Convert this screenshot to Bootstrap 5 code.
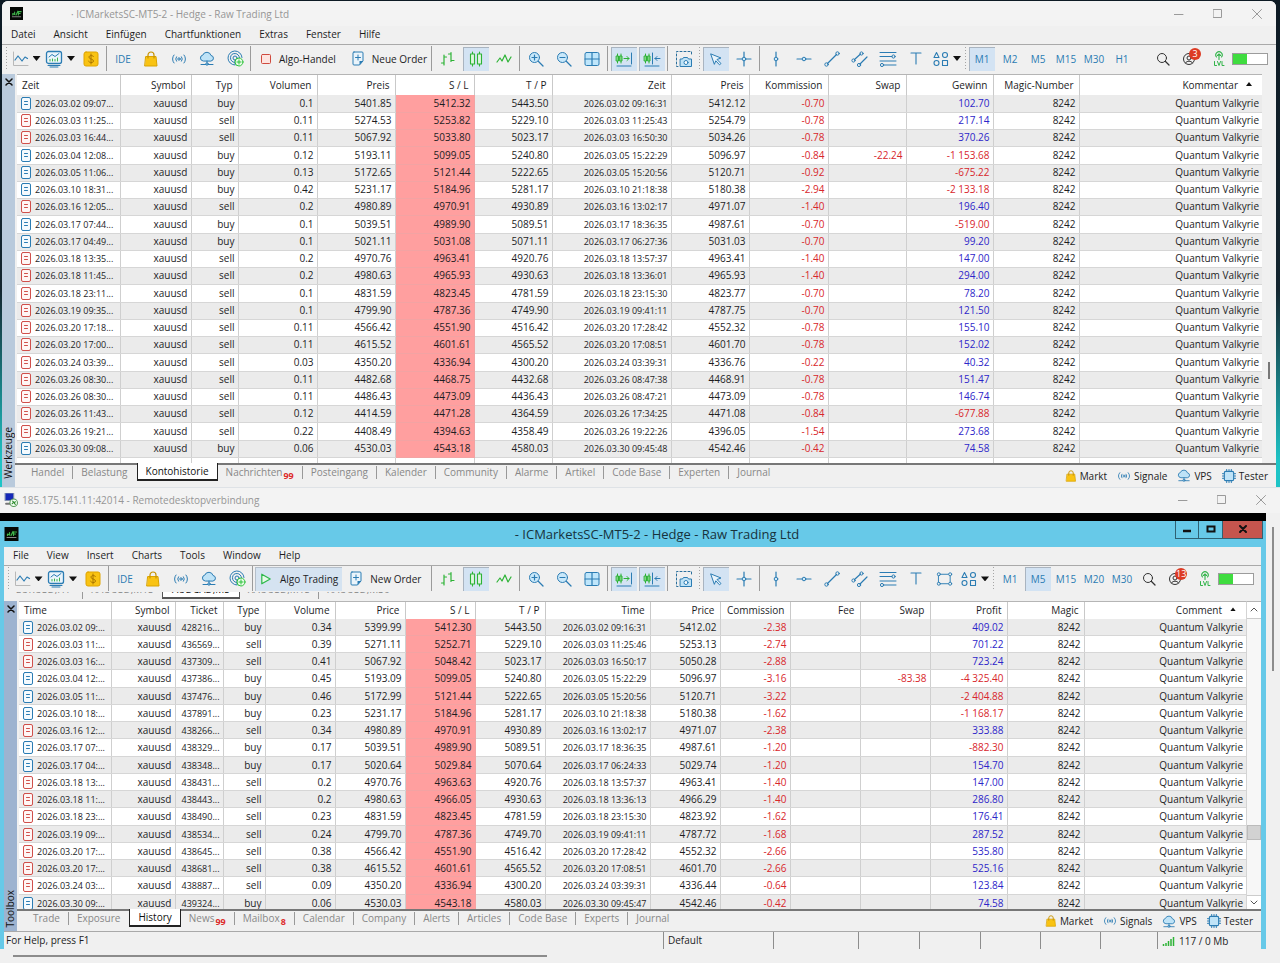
<!DOCTYPE html>
<html lang="de">
<head>
<meta charset="utf-8">
<meta name="viewport" content="width=device-width, initial-scale=1">
<title>ICMarketsSC-MT5-2 - Hedge - Raw Trading Ltd</title>
<link href="https://cdn.jsdelivr.net/npm/bootstrap@5.3.0/dist/css/bootstrap.min.css" rel="stylesheet">
<style>
:root{--ui:"Open Sans","Noto Sans",sans-serif;--ink:#1d1d1f;--blue:#2b7cb3;--line:#a9a9a9}
body{font-family:var(--ui);font-size:10px;line-height:16px;color:var(--ink);background:linear-gradient(#0d1a24 0,#14252f 30%,#1ec4c6 48%,#1ec4c6 100%)}
button,a{font:inherit;color:inherit;text-decoration:none}
button{background:none;border:0;padding:0}
svg{display:block;fill:none;stroke-linecap:round;stroke-linejoin:round}
/* windows */
.win-local{flex:487 1 0;min-height:0;margin:1px 4px 0 2px;background:#f0f0f0;border-radius:6px 6px 0 0}
.win-remote{flex:476 1 0;min-height:0;background:#f0f0f0}
.bar-title{height:25px;background:#f3f3f3;color:#969696;flex:none}
.win-local .bar-title{border-radius:6px 6px 0 0}
.win-btns{color:#9a9a9a}
.win-btns button{width:39px;display:flex;justify-content:center}
.bar-menu{height:18px;flex:none}
.bar-menu a{padding:0 9px}
.bar-tools{height:30px;flex:none;border-top:1px solid var(--line);padding-bottom:2px}
.lead-set{width:428px;flex:none;padding-left:3px}
.tool{width:28px;height:24px;flex:none;display:flex;align-items:center;justify-content:center;color:var(--blue);position:relative}
.tail .tool{width:26px}
.tool.wide{width:34px;gap:4px}
.tool.on::before{content:"";position:absolute;inset:0 1px;background:#d3e3f3;border:1px solid #a9b4c0;border-width:1px 0 0 1px}
.tool>*{position:relative;white-space:nowrap}
.tool>.note{position:absolute;left:13px;top:1px;min-width:12px;height:12px;padding:0 1px;border-radius:6px;background:#dd3b24;color:#fff;font-size:9px;line-height:12px;text-align:center}
.sep{width:4px;height:25px;flex:none;background:linear-gradient(#9b9b9b,#9b9b9b) 1px 0/1px 100% no-repeat}
.grip{width:4px;height:24px;flex:none;background:repeating-linear-gradient(#a5a5a5 0 1px,transparent 1px 3px) 1px 0/1px 100% no-repeat}
.tool-text{height:24px;display:flex;align-items:center;gap:8px;flex:none;white-space:nowrap}
.tool-text.on{background:#d5e3f1;border:1px solid #b5bfca;border-width:1px 0 0 1px}
.caret{width:8px;height:5px;background:#111;clip-path:polygon(0 0,100% 0,50% 100%)}
.meter{width:36px;height:12px;border:1px solid #9c9c9c;background:linear-gradient(90deg,#3fdc3f 40%,#fff 40%)}
/* docked panel */
.dock{flex:1 1 0;min-height:0}
.dock-main{min-width:0}
.pane{padding-left:2px}
.rail{width:13px;flex:none;background:#b9cadc;color:#111}
.rail span{writing-mode:vertical-rl;transform:rotate(180deg);line-height:13px}
.grid-wrap{overflow:hidden;background:#fff;border-top:1px solid #b5b5b5;flex:1 1 0;min-width:0}
.deals{table-layout:fixed;width:100%;border-collapse:collapse;white-space:nowrap}
.deals th{font-weight:400;height:20px;padding:0 5px;text-align:right;border-right:1px solid #c9c9c9;line-height:18px}
.deals td{height:17px;padding:0 3px 0 0;text-align:right;border-right:1px solid #cfcfcf;border-bottom:1px solid #d6d6d6;line-height:15px}
.deals td.num{font-size:9px}
.deals tr:nth-child(4n) td{height:18px}
.deals th:first-child,.deals td:first-child{text-align:left}
.deals td:first-child svg{display:inline-block;vertical-align:-3px;margin:0 4px}
.deals tbody tr:nth-child(odd) td{background:#ebebeb}
.deals tbody tr td.stop{background:#ff9f9f;border-color:#f2a3a3}
.deals tbody tr.rest td{background:#fff}
.deals .neg{color:#d8262c}.deals .pos{color:#2d25c9}
.deals th:last-child,.deals td:last-child{border-right:0}
.sort{display:inline-block;width:6px;height:4px;background:#111;clip-path:polygon(50% 0,100% 100%,0 100%);margin:0 5px 3px 8px}
.tabs{height:24px;flex:none;border-top:2px solid #777;color:#888}
.tabs a.t{padding:0 8px;display:block;border-right:1px solid #999;height:13px;line-height:13px;margin-top:1px;white-space:nowrap}
.tabs a.t.end{border-color:transparent}
.tabs a.t.cur{height:18px;margin-top:-2px;line-height:17px;background:#fff;color:#111;border:1px solid #222;border-width:0 1px 2px}
.tabs sub{color:#dd2b2b;font-weight:700;font-size:9px;bottom:-3px;margin-left:1px;line-height:0}
.links{gap:10px;color:#222}
.links a{display:flex;align-items:center;gap:3px}
.local-thumb{width:14px;flex:none;background:#f0f0f0}
.local-thumb i{width:2px;height:17px;background:#777;margin:auto 0 84px 6px}
/* remote session */
.session{border:solid #67c9e8;border-width:0 5px 0 4px;background:#f0f0f0;flex:1 1 0;min-width:0;min-height:0}
.session-title{height:26px;background:#67c9e8;font-size:13px;color:#17323c;margin:0 -5px 0 -4px;flex:none;position:relative}
.session-btns{position:absolute;right:3px;top:0}
.session-btns button{height:18px;width:24px;border:1px solid #2f6173;border-left-width:0;border-top:0;display:flex;align-items:center;justify-content:center}
.session-btns button:first-child{border-left-width:1px}
.session-btns .quit{width:40px;background:#c5554e}
.session .rail{background:#9db3d0}
.session .bar-tools{height:27px;padding-bottom:0}
.session .lead-set{width:426px}
.session .deals th{height:17px;line-height:16px}
.session .tabs{height:22px}
.chart-tabs{height:9px;overflow:hidden;flex:none;color:#888}
.chart-tabs ul{margin:-11px 0 0}
.chart-tabs li{width:79px;text-align:center}
.chart-tabs .cur{width:78px;background:#fff;border:1px solid #555;border-width:0 1px 2px;color:#111}
.chart-tabs .bar{border-right:1px solid #999}
.vscroll{width:15px;flex:none;background:#f7f7f7;border-left:1px solid #d4d4d4;border-top:1px solid #b5b5b5}
.vscroll button{height:17px;display:flex;align-items:center;justify-content:center;background:#fff;border:solid #ccc;border-width:0 0 1px}
.vscroll button:last-child{border-width:1px 0 0;height:14px}
.vscroll .knob{height:15px;background:#d2d2d2;border:1px solid #bbb;margin-bottom:55px}
.status{display:grid;grid-template-columns:1fr 110px 85px 61px 61px 60px 60px 57px 104px;height:18px;border-top:1px solid var(--line);flex:none}
.status>div+div{border-left:1px solid #8d8d8d;padding-left:4px}
.status>div:first-child{padding-left:2px}
.outer-v{width:14px;flex:none}
.outer-v i{width:2px;height:144px;background:#8c8c8c;margin:14px auto 0}
.outer-h{height:14px;flex:none}
.outer-h i{height:2px;width:42%;background:#8c8c8c;margin-left:5px}
</style>
</head>
<body class="d-flex flex-column vh-100 overflow-hidden">

<svg width="0" height="0" class="position-absolute" aria-hidden="true">
<symbol id="logo" viewBox="0 0 14 14"><rect width="14" height="14" fill="#050805"/><path d="M3 8.500V7l2 1V5.500M6.500 8.500l2-4M9 8.500V5h3M9 7h2" stroke="#3fb54a" stroke-width="1.200"/><path d="M2.500 10.500h9" stroke="#8a8a8a"/></symbol>
<symbol id="chart" viewBox="0 0 17 16"><path d="M1.500 1v13.500H16" stroke="#b8b8b8"/><path d="M3 9l3-4 4 5 3-4 2.500 1.500" stroke="#2b7cb3" stroke-width="1.200"/></symbol>
<symbol id="charts" viewBox="0 0 18 18"><rect x="1.500" y="1.500" width="15" height="12" rx="2" stroke="#2b7cb3" stroke-width="1.300" fill="#eaf4fb"/><path d="M4 7l3-2.500 3 2 4-3" stroke="#2b7cb3"/><path d="M5 11V9.500M7.500 11V9M10 11V9.500M12.500 11V8" stroke="#3bb54a"/><path d="M3 15.500h12M5 17h8" stroke="#2b7cb3"/></symbol>
<symbol id="dollar" viewBox="0 0 16 16"><rect x="1" y="1" width="14" height="14" rx="2" fill="#f9c313" stroke="#e0a400"/><path d="M10.500 5.500C10 4.200 6 4 6 6.200S10.500 7.800 10.500 10 6 12 5.500 10.200M8 3v10" stroke="#a87400"/></symbol>
<symbol id="bag" viewBox="0 0 16 16"><path d="M3 5.500h10l1 9.500H2z" fill="#f9c313" stroke="#d9a300"/><path d="M5 7V4a3 3 0 0 1 6 0v3" stroke="#c79200" stroke-width="1.200"/></symbol>
<symbol id="signal" viewBox="0 0 16 12"><g stroke="#2b7cb3"><circle cx="8" cy="6" r="1.200"/><path d="M5.500 3.800a3.500 3.500 0 0 0 0 4.400M10.500 3.800a3.500 3.500 0 0 1 0 4.400M3 2a6 6 0 0 0 0 8M13 2a6 6 0 0 1 0 8" /></g></symbol>
<symbol id="cloud" viewBox="0 0 16 15"><path d="M4 10a3 3 0 0 1-.2-5.900A4.300 4.300 0 0 1 12 4.500 2.800 2.800 0 0 1 12.300 10z" fill="#bfe3f7" stroke="#2b7cb3"/><path d="M8 10v3M2 13.500h12" stroke="#2b7cb3"/><circle cx="8" cy="13" r="1.200" fill="#bfe3f7" stroke="#2b7cb3"/></symbol>
<symbol id="globe" viewBox="0 0 17 17"><g stroke="#2b7cb3"><path d="M8 15A7 7 0 1 1 15 7.500"/><path d="M7.500 12.500A4.500 4.500 0 1 1 12.500 8"/><circle cx="8" cy="8" r="2"/><path d="M8 10v4"/></g><circle cx="12" cy="12" r="4" fill="#e6fae6" stroke="#2fc23c"/><path d="M12 10v4M10 12h4" stroke="#2fc23c"/></symbol>
<symbol id="square" viewBox="0 0 10 10"><rect x=".5" y=".5" width="9" height="9" rx="1" fill="#fde4e0" stroke="#cf4a3e"/></symbol>
<symbol id="play" viewBox="0 0 10 10"><path d="M1.500 1l7 4-7 4z" fill="#e6fbe8" stroke="#2db84a"/></symbol>
<symbol id="order" viewBox="0 0 12 15"><path d="M2 1h8a1 1 0 0 1 1 1v8l-3.500 4H2a1 1 0 0 1-1-1V2a1 1 0 0 1 1-1z" fill="#eaf4fb" stroke="#2b7cb3"/><path d="M7.500 14v-4H11z" fill="#2b7cb3"/><path d="M6 4v5M3.500 6.500h5" stroke="#2b7cb3"/></symbol>
<symbol id="bars" viewBox="0 0 16 16"><path d="M4 4v10M1.500 12H4M4 6h2.500M11 1.500v9M8.500 3H11M11 9.500h3" stroke="#2db336" stroke-width="1.200"/></symbol>
<symbol id="candles" viewBox="0 0 14 16"><g stroke="#2db336" stroke-width="1.100" fill="#dff5e0"><path d="M3.500 1v14M10.500 1v14"/><rect x="1.500" y="3" width="4" height="10"/><rect x="8.500" y="3" width="4" height="10"/></g></symbol>
<symbol id="zig" viewBox="0 0 16 12"><path d="M1 9l3-4 2 3 3-6 3 7 3-5" stroke="#2db336" stroke-width="1.200"/></symbol>
<symbol id="zin" viewBox="0 0 16 16"><g stroke="#2b7cb3"><circle cx="6.500" cy="6.500" r="5" fill="#c9e8fa"/><path d="M10.500 10.500l4.500 4.500" stroke-width="1.300"/><path d="M4 6.500h5M6.500 4v5" stroke-width="1.200"/></g></symbol>
<symbol id="zout" viewBox="0 0 16 16"><g stroke="#2b7cb3"><circle cx="6.500" cy="6.500" r="5" fill="#c9e8fa"/><path d="M10.500 10.500l4.500 4.500" stroke-width="1.300"/><path d="M4 6.500h5" stroke-width="1.200"/></g></symbol>
<symbol id="tiles" viewBox="0 0 16 16"><rect x="1" y="1.500" width="14" height="13" rx="1.500" fill="#bfe6fb" stroke="#2b7cb3"/><path d="M8 2v12M1 8h14" stroke="#2b7cb3" stroke-width="1.200"/></symbol>
<symbol id="shiftr" viewBox="0 0 18 16"><g stroke="#2db336" fill="#7fd584"><path d="M2.500 3v9M6 3v9"/><rect x="1.500" y="5" width="2" height="5"/><rect x="5" y="5" width="2" height="5"/><path d="M9 7.500h5M12 5.500l2 2-2 2" fill="none"/></g><path d="M16.500 2v11M2 15h14" stroke="#2b7cb3"/></symbol>
<symbol id="shiftl" viewBox="0 0 18 16"><g stroke="#2db336" fill="#7fd584"><path d="M2.500 3v9M6 3v9"/><rect x="1.500" y="5" width="2" height="5"/><rect x="5" y="5" width="2" height="5"/></g><path d="M9.500 2v11M2 15h14M17 7.500h-5M14 5.500l-2 2 2 2" stroke="#2b7cb3"/></symbol>
<symbol id="camera" viewBox="0 0 18 18"><path d="M3 16.500H1.500v-15h15V6" stroke="#2b6f9c" stroke-dasharray="2 2"/><path d="M5.500 9h2l1-1.500h4l1 1.500h3v7.500h-11z" fill="#bfe3f7" stroke="#2b7cb3"/><circle cx="11" cy="12.500" r="2" fill="#fff" stroke="#2b7cb3"/></symbol>
<symbol id="arrow" viewBox="0 0 14 14"><path d="M2 2l10 4-4 1.500 4 4-1.500 1.300-3.700-4L5.500 12z" fill="#eaf4fb" stroke="#2b7cb3"/></symbol>
<symbol id="cross" viewBox="0 0 16 16"><path d="M8 1v5M8 10v5M1 8h5M10 8h5" stroke="#2b7cb3" stroke-width="1.200"/><circle cx="8" cy="8" r="1.800" stroke="#2b7cb3" fill="#cfe9f8"/></symbol>
<symbol id="vert" viewBox="0 0 16 16"><path d="M8 1v5M8 10v5" stroke="#2b7cb3" stroke-width="1.200"/><circle cx="8" cy="8" r="1.800" stroke="#2b7cb3" fill="#cfe9f8"/></symbol>
<symbol id="horz" viewBox="0 0 16 16"><path d="M1 8h5M10 8h5" stroke="#2b7cb3" stroke-width="1.200"/><circle cx="8" cy="8" r="1.800" stroke="#2b7cb3" fill="#cfe9f8"/></symbol>
<symbol id="trend" viewBox="0 0 16 16"><g stroke="#2b7cb3"><path d="M3.500 12.500l9-9" stroke-width="1.200"/><circle cx="2.500" cy="13.500" r="1.700"/><circle cx="13.500" cy="2.500" r="1.700"/></g></symbol>
<symbol id="channel" viewBox="0 0 18 16"><g stroke="#2b7cb3"><path d="M3.500 8.500l6-5.500M9 13l7-7" stroke-width="1.200"/><circle cx="2.500" cy="9.500" r="1.600"/><circle cx="10.500" cy="2.500" r="1.600"/><circle cx="8" cy="14" r="1.600"/></g></symbol>
<symbol id="fibo" viewBox="0 0 18 16"><g stroke="#2b7cb3"><path d="M1 1.500h16M1 5.500h12M1 10h16M5 14h12"/><circle cx="14.500" cy="5.500" r="1.600"/><circle cx="3" cy="14" r="1.600"/></g></symbol>
<symbol id="text" viewBox="0 0 12 13"><path d="M1 1h10M6 1v11" stroke="#2b7cb3" stroke-width="1.100"/></symbol>
<symbol id="box" viewBox="0 0 18 16"><g stroke="#2b7cb3"><path d="M3 3h12v10H3z"/><g fill="#f0f0f0"><circle cx="3" cy="3" r="1.600"/><circle cx="15" cy="3" r="1.600"/><circle cx="3" cy="13" r="1.600"/><circle cx="15" cy="13" r="1.600"/></g></g></symbol>
<symbol id="shapes" viewBox="0 0 16 16"><g stroke="#2b7cb3" stroke-width="1.100"><path d="M3.500 1.500l2.500 5H1z"/><circle cx="12" cy="4" r="2.500"/><circle cx="3.500" cy="12" r="2.500"/><rect x="9.500" y="9.500" width="5" height="5"/></g></symbol>
<symbol id="search" viewBox="0 0 14 14"><circle cx="6" cy="6" r="4.500" stroke="#333"/><path d="M9.500 9.500L13 13" stroke="#333" stroke-width="1.300"/></symbol>
<symbol id="user" viewBox="0 0 14 14"><circle cx="7" cy="7" r="5.500" stroke="#333"/><circle cx="7" cy="6" r="2" stroke="#333"/><path d="M3.500 11c1-2.500 6-2.500 7 0" stroke="#333"/></symbol>
<symbol id="level" viewBox="0 0 12 15"><g stroke="#32b44a"><path d="M6 8.500V4M3.500 6a3.200 3.200 0 1 1 5 0M4.500 4.500L6 3l1.500 1.500" stroke-width="1.100"/><path d="M1.500 10.500v4h2M4.500 10.500l1.500 4 1.500-4M9 10.500v4h2"/></g></symbol>
<symbol id="chip" viewBox="0 0 15 15"><path d="M5 0v15M7.500 0v15M10 0v15M0 5h15M0 7.500h15M0 10h15" stroke="#2b7cb3"/><rect x="2.500" y="2.500" width="10" height="10" rx="1.500" fill="#bfe3f7" stroke="#2b7cb3" stroke-width="1.200"/></symbol>
<symbol id="doc-b" viewBox="0 0 10 13"><rect x=".5" y=".5" width="9" height="12" rx="1.500" fill="#f4fafe" stroke="#2b7cb3"/><path d="M3.500 4.500h3M3.500 7.500h3" stroke="#2b7cb3"/></symbol>
<symbol id="doc-s" viewBox="0 0 10 13"><rect x=".5" y=".5" width="9" height="12" rx="1.500" fill="#fff6f5" stroke="#d0504b"/><path d="M3.500 4.500h3M3.500 7.500h3" stroke="#d0504b"/></symbol>
<symbol id="rdp" viewBox="0 0 13 13"><rect x="1" y="0" width="8" height="7" fill="#1628b8" stroke="#7f8fb0"/><path d="M2 10h6" stroke="#777" stroke-width="2"/><circle cx="9" cy="9" r="3.500" fill="#f4fff4" stroke="#5a9a5a"/><path d="M7.500 10l1.500-1.500L8 7.500M10.500 8L9.500 9.500l1 1" stroke="#2d8a2d"/></symbol>
<symbol id="min" viewBox="0 0 10 10"><path d="M0 5.500h9" stroke="#9a9a9a"/></symbol>
<symbol id="max" viewBox="0 0 10 10"><rect x=".5" y=".5" width="8" height="8" stroke="#9a9a9a"/></symbol>
<symbol id="close" viewBox="0 0 10 10"><path d="M.5.5l9 9M9.500.5l-9 9" stroke="#9a9a9a"/></symbol>
<symbol id="x" viewBox="0 0 8 8"><path d="M1 1l6 6M7 1L1 7" stroke="#111" stroke-width="1.500"/></symbol>
</svg>

<section class="win-local d-flex flex-column">
  <header class="bar-title d-flex align-items-center">
    <svg class="ms-2" width="13" height="13"><use href="#logo"/></svg>
    <span class="ms-5 me-auto">· ICMarketsSC-MT5-2 - Hedge - Raw Trading Ltd</span>
    <div class="win-btns d-flex">
      <button aria-label="Minimieren"><svg width="10" height="10"><use href="#min"/></svg></button>
      <button aria-label="Maximieren"><svg width="10" height="10"><use href="#max"/></svg></button>
      <button aria-label="Schließen"><svg width="10" height="10"><use href="#close"/></svg></button>
    </div>
  </header>
  <nav class="bar-menu d-flex" data-menu="Datei|Ansicht|Einfügen|Chartfunktionen|Extras|Fenster|Hilfe"></nav>
  <div class="bar-tools d-flex align-items-center" data-tools="local"></div>
  <div class="dock d-flex">
    <div class="rail d-flex flex-column align-items-center justify-content-between pt-1 pb-2"><button aria-label="Schließen"><svg width="8" height="8"><use href="#x"/></svg></button><span>Werkzeuge</span></div>
    <div class="dock-main d-flex flex-column flex-grow-1">
      <div class="dock pane d-flex"><div class="grid-wrap"><table class="deals" id="deals-local"></table></div><div class="local-thumb d-flex"><i></i></div></div>
      <div class="tabs d-flex" data-tabs="Handel|Belastung|*Kontohistorie|Nachrichten#99|Posteingang|Kalender|Community|Alarme|Artikel|Code Base|Experten|Journal" data-links="Markt|Signale|VPS|Tester"></div>
    </div>
  </div>
</section>

<section class="win-remote d-flex flex-column border-top">
  <header class="bar-title d-flex align-items-center">
    <svg class="ms-1" width="14" height="14"><use href="#rdp"/></svg>
    <span class="ms-1 me-auto">185.175.141.11:42014 - Remotedesktopverbindung</span>
    <div class="win-btns d-flex">
      <button aria-label="Minimieren"><svg width="10" height="10"><use href="#min"/></svg></button>
      <button aria-label="Maximieren"><svg width="10" height="10"><use href="#max"/></svg></button>
      <button aria-label="Schließen"><svg width="10" height="10"><use href="#close"/></svg></button>
    </div>
  </header>
  <div class="dock d-flex">
    <div class="dock-main d-flex flex-column flex-grow-1">
      <div class="bg-black flex-shrink-0 pt-2"></div>
      <div class="session d-flex flex-column">
        <header class="session-title d-flex align-items-center justify-content-center">
          <svg class="position-absolute start-0 ms-1" width="15" height="14"><use href="#logo"/></svg>
          <span class="ps-5">- ICMarketsSC-MT5-2 - Hedge - Raw Trading Ltd</span>
          <div class="session-btns d-flex">
            <button aria-label="Minimize"><svg width="10" height="8"><path d="M1 6h8" stroke="#111" stroke-width="2.500" stroke-linecap="butt"/></svg></button>
            <button aria-label="Maximize"><svg width="10" height="8"><path d="M1.500 1.500h7v5h-7z" stroke="#111" stroke-width="2" stroke-linejoin="miter"/></svg></button>
            <button class="quit" aria-label="Close"><svg width="8" height="8"><path d="M1 1l6 6M7 1L1 7" stroke="#111" stroke-width="2"/></svg></button>
          </div>
        </header>
        <nav class="bar-menu d-flex" data-menu="File|View|Insert|Charts|Tools|Window|Help"></nav>
        <div class="bar-tools d-flex align-items-center" data-tools="remote"></div>
        <div class="chart-tabs"><ul class="list-unstyled d-flex"><li class="bar">EURUSD,H1</li><li>XAUUSD,M15</li><li class="cur">AUDCAD,M5</li><li class="bar">XAUUSD,M15</li><li>XAUUSD,M30</li></ul></div>
        <div class="dock d-flex">
          <div class="rail d-flex flex-column align-items-center justify-content-between pt-1 pb-1"><button aria-label="Close"><svg width="8" height="8"><use href="#x"/></svg></button><span>Toolbox</span></div>
          <div class="dock-main d-flex flex-column flex-grow-1">
            <div class="dock pane d-flex"><div class="grid-wrap"><table class="deals" id="deals-remote"></table></div>
              <div class="vscroll d-flex flex-column"><button aria-label="Up"><svg width="8" height="5"><path d="M1 4l3-3 3 3" stroke="#555"/></svg></button><div class="knob mt-auto"></div><button aria-label="Down"><svg width="8" height="5"><path d="M1 1l3 3 3-3" stroke="#555"/></svg></button></div>
            </div>
            <div class="tabs d-flex" data-tabs="Trade|Exposure|*History|News#99|Mailbox#8|Calendar|Company|Alerts|Articles|Code Base|Experts|Journal" data-links="Market|Signals|VPS|Tester"></div>
          </div>
        </div>
        <footer class="status"><div>For Help, press F1</div><div>Default</div><div></div><div></div><div></div><div></div><div></div><div></div>
          <div class="d-flex align-items-center gap-1"><svg width="13" height="10"><path d="M1.500 10V8M4 10V7M6.500 10V5M9 10V3M11.500 10V1" stroke="#2db336" stroke-width="1.500" stroke-linecap="butt"/></svg>117 / 0 Mb</div></footer>
      </div>
    </div>
    <div class="outer-v d-flex"><i></i></div>
  </div>
  <div class="outer-h d-flex align-items-center ps-2"><i></i></div>
</section>

<script>
const icon=(n,w,h)=>`<svg width="${w}" height="${h}"><use href="#${n}"/></svg>`;
const tool=(n,w=16,h=16,on='')=>`<button class="tool ${on}" aria-label="${n}">${icon(n,w,h)}</button>`;
const drop=(n,w,h)=>`<button class="tool wide" aria-label="${n}">${icon(n,w,h)}<span class="caret"></span></button>`;
const frame=(t,on='')=>`<button class="tool ${on}"><span>${t}</span></button>`;
const SEP='<div class="sep"></div>',GRIP='<div class="grip"></div>';
const BARS={
 local:{algo:`<button class="tool-text ps-2 pe-3">${icon('square',10,10)}Algo-Handel</button>`,order:'Neue Order',box:'',frames:['*M1','M2','M5','M15','M30','H1'],notes:3},
 remote:{algo:`<button class="tool-text on px-1 me-2">${icon('play',12,12)}Algo Trading</button>`,order:'New Order',box:tool('box',17,16),frames:['M1','*M5','M15','M20','M30'],notes:13}};
document.querySelectorAll('[data-tools]').forEach(el=>{
 const b=BARS[el.dataset.tools];
 el.innerHTML=`<div class="lead-set d-flex align-items-center">${GRIP}${drop('chart',17,16)}${drop('charts',18,18)}${tool('dollar')}${SEP}
 <button class="tool"><span>IDE</span></button>${tool('bag')}${tool('signal',16,12)}${tool('cloud',16,15)}${tool('globe',17,17)}${SEP}
 ${b.algo}<button class="tool-text">${icon('order',12,15)}${b.order}</button></div>${SEP}
 ${tool('bars')}${tool('candles',14,16,'on')}${tool('zig',16,12)}${SEP}${tool('zin')}${tool('zout')}${tool('tiles')}${SEP}
 ${tool('shiftr',18,16,'on')}${tool('shiftl',18,16,'on')}${SEP}${tool('camera',18,18)}${GRIP}${tool('arrow',14,14,'on')}${tool('cross')}${SEP}
 ${tool('vert')}${tool('horz')}${tool('trend')}${tool('channel',18,16)}${tool('fibo',18,16)}${tool('text',12,13)}${b.box}${drop('shapes',16,16)}${GRIP}
 ${b.frames.map(f=>frame(f.replace('*',''),f[0]=='*'?'on':'')).join('')}
 <div class="d-flex align-items-center ms-auto tail">${tool('search',14,14)}<button class="tool me-1" aria-label="Account">${icon('user',14,14)}<span class="note">${b.notes}</span></button>
 ${tool('level',12,15)}<div class="meter me-2"></div></div>`;
});
document.querySelectorAll('[data-menu]').forEach(el=>el.innerHTML=el.dataset.menu.split('|').map(t=>`<a href="#">${t}</a>`).join(''));
document.querySelectorAll('[data-tabs]').forEach(el=>{
 const l=el.dataset.tabs.split('|'),k=el.dataset.links.split('|');
 el.innerHTML='<div class="d-flex ps-1 ms-1">'+l.map((t,i)=>{const[n,c]=t.split('#');const cur=n[0]=='*',end=i==l.length-1||(l[i+1]||'')[0]=='*';
  return `<a href="#" class="t ${cur?'cur':''} ${end?'end':''}">${n.replace('*','')}${c?`<sub>${c}</sub>`:''}</a>`}).join('')+
 `</div><div class="links d-flex ms-auto pe-2"><a href="#">${icon('bag',12,14)}${k[0]}</a><a href="#">${icon('signal',14,10)}${k[1]}</a><a href="#">${icon('cloud',14,13)}${k[2]}</a><a href="#">${icon('chip',14,14)}${k[3]}</a></div>`;
});
const LOCAL=`02 09:07|buy|0.1|5401.85|5412.32|5443.50|02 09:16:31|5412.12|-0.70||102.70
03 11:25|sell|0.11|5274.53|5253.82|5229.10|03 11:25:43|5254.79|-0.78||217.14
03 16:44|sell|0.11|5067.92|5033.80|5023.17|03 16:50:30|5034.26|-0.78||370.26
04 12:08|buy|0.12|5193.11|5099.05|5240.80|05 15:22:29|5096.97|-0.84|-22.24|-1 153.68
05 11:06|buy|0.13|5172.65|5121.44|5222.65|05 15:20:56|5120.71|-0.92||-675.22
10 18:31|buy|0.42|5231.17|5184.96|5281.17|10 21:18:38|5180.38|-2.94||-2 133.18
16 12:05|sell|0.2|4980.89|4970.91|4930.89|16 13:02:17|4971.07|-1.40||196.40
17 07:44|buy|0.1|5039.51|4989.90|5089.51|17 18:36:35|4987.61|-0.70||-519.00
17 04:49|buy|0.1|5021.11|5031.08|5071.11|17 06:27:36|5031.03|-0.70||99.20
18 13:35|sell|0.2|4970.76|4963.41|4920.76|18 13:57:37|4963.41|-1.40||147.00
18 11:45|sell|0.2|4980.63|4965.93|4930.63|18 13:36:01|4965.93|-1.40||294.00
18 23:11|sell|0.1|4831.59|4823.45|4781.59|18 23:15:30|4823.77|-0.70||78.20
19 09:35|sell|0.1|4799.90|4787.36|4749.90|19 09:41:11|4787.75|-0.70||121.50
20 17:18|sell|0.11|4566.42|4551.90|4516.42|20 17:28:42|4552.32|-0.78||155.10
20 17:00|sell|0.11|4615.52|4601.61|4565.52|20 17:08:51|4601.70|-0.78||152.02
24 03:39|sell|0.03|4350.20|4336.94|4300.20|24 03:39:31|4336.76|-0.22||40.32
26 08:30|sell|0.11|4482.68|4468.75|4432.68|26 08:47:38|4468.91|-0.78||151.47
26 08:30|sell|0.11|4486.43|4473.09|4436.43|26 08:47:21|4473.09|-0.78||146.74
26 11:43|sell|0.12|4414.59|4471.28|4364.59|26 17:34:25|4471.08|-0.84||-677.88
26 19:21|sell|0.22|4408.49|4394.63|4358.49|26 19:22:26|4396.05|-1.54||273.68
30 09:08|buy|0.06|4530.03|4543.18|4580.03|30 09:45:48|4542.46|-0.42||74.58`;
const REMOTE=`02 09:|428216|buy|0.34|5399.99|5412.30|5443.50|02 09:16:31|5412.02|-2.38||409.02
03 11:|436569|sell|0.39|5271.11|5252.71|5229.10|03 11:25:46|5253.13|-2.74||701.22
03 16:|437309|sell|0.41|5067.92|5048.42|5023.17|03 16:50:17|5050.28|-2.88||723.24
04 12:|437386|buy|0.45|5193.09|5099.05|5240.80|05 15:22:29|5096.97|-3.16|-83.38|-4 325.40
05 11:|437476|buy|0.46|5172.99|5121.44|5222.65|05 15:20:56|5120.71|-3.22||-2 404.88
10 18:|437891|buy|0.23|5231.17|5184.96|5281.17|10 21:18:38|5180.38|-1.62||-1 168.17
16 12:|438266|sell|0.34|4980.89|4970.91|4930.89|16 13:02:17|4971.07|-2.38||333.88
17 07:|438329|buy|0.17|5039.51|4989.90|5089.51|17 18:36:35|4987.61|-1.20||-882.30
17 04:|438348|buy|0.17|5020.64|5029.84|5070.64|17 06:24:33|5029.74|-1.20||154.70
18 13:|438431|sell|0.2|4970.76|4963.63|4920.76|18 13:57:37|4963.41|-1.40||147.00
18 11:|438443|sell|0.2|4980.63|4966.05|4930.63|18 13:36:13|4966.29|-1.40||286.80
18 23:|438490|sell|0.23|4831.59|4823.45|4781.59|18 23:15:30|4823.92|-1.62||176.41
19 09:|438534|sell|0.24|4799.70|4787.36|4749.70|19 09:41:11|4787.72|-1.68||287.52
20 17:|438645|sell|0.38|4566.42|4551.90|4516.42|20 17:28:42|4552.32|-2.66||535.80
20 17:|438681|sell|0.38|4615.52|4601.61|4565.52|20 17:08:51|4601.70|-2.66||525.16
24 03:|438887|sell|0.09|4350.20|4336.94|4300.20|24 03:39:31|4336.44|-0.64||123.84
30 09:|439324|buy|0.06|4530.03|4543.18|4580.03|30 09:45:47|4542.46|-0.42||74.58`;
function fill(id,heads,widths,text,remote){
 const n=heads.length;
 const rows=text.split('\n').map(r=>{
  const f=r.split('|');let tick='';
  if(remote)tick=f.splice(1,1)[0];
  const[open,typ,vol,price,sl,tp,close,cprice,comm,swap,profit]=f;
  const c=v=>v?(v[0]=='-'?'neg':'pos'):'';
  const cells=[[icon(typ=='buy'?'doc-b':'doc-s',10,13)+'2026.03.'+open+'...','num'],['xauusd']];
  if(remote)cells.push([tick+'...','num']);
  cells.push([typ],[vol],[price],[sl,'stop'],[tp],['2026.03.'+close,'num'],[cprice],[comm,'neg']);
  if(remote)cells.push(['']);
  cells.push([swap,c(swap)],[profit,c(profit)],['8242'],['Quantum Valkyrie']);
  return '<tr>'+cells.map(([t,k])=>`<td class="${k||''}">${t}</td>`).join('')+'</tr>'}).join('');
 document.getElementById(id).innerHTML='<colgroup>'+widths.map(w=>`<col style="width:${w}px">`).join('')+'<col></colgroup><thead><tr>'+
  heads.map((h,i)=>`<th scope="col">${h}${i==n-1?'<span class="sort"></span>':''}</th>`).join('')+'</tr></thead><tbody>'+rows+(remote?'':'<tr class="rest">'+'<td></td>'.repeat(n)+'</tr>')+'</tbody>';
}
fill('deals-local',['Zeit','Symbol','Typ','Volumen','Preis','S / L','T / P','Zeit','Preis','Kommission','Swap','Gewinn','Magic-Number','Kommentar'],[103,71,47,79,78,79,78,119,78,79,78,87,86],LOCAL,false);
fill('deals-remote',['Time','Symbol','Ticket','Type','Volume','Price','S / L','T / P','Time','Price','Commission','Fee','Swap','Profit','Magic','Comment'],[92,64,48,42,70,70,70,70,105,70,70,70,70,77,77],REMOTE,true);
</script>
<script src="https://cdn.jsdelivr.net/npm/bootstrap@5.3.0/dist/js/bootstrap.bundle.min.js"></script>
</body>
</html>
